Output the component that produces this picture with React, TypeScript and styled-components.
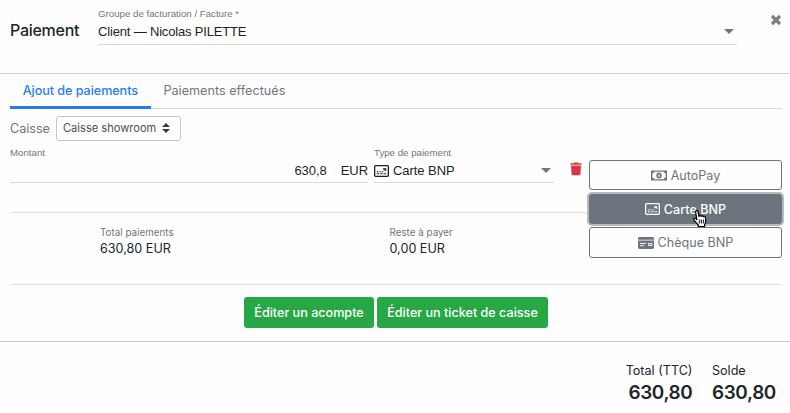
import React from 'react';
import styled, { createGlobalStyle, css } from 'styled-components';

const GlobalStyle = createGlobalStyle`
  * { box-sizing: border-box; }
  body {
    margin: 0;
    background: #fefefe;
    color: #212529;
    font-family: Inter, sans-serif;
    font-size: 12.6px;
    overflow: hidden;
  }
`;

const Dialog = styled.main`
  display: flex;
  flex-direction: column;
  width: 790px;
  height: 413px;
`;

const Header = styled.header`
  display: flex;
  height: 74px;
  padding-left: 10px;
  border-bottom: 1px solid #cfd0d2;
`;

const Title = styled.h1`
  width: 88px;
  margin: 20px 0 0;
  font-size: 16px;
  line-height: 20px;
  font-weight: 500;
  letter-spacing: -0.28px;
`;

const material = css`
  font-family: "Liberation Sans", Arial, sans-serif;
  color: #1f1f1f;
`;

const InvoiceField = styled.div`
  ${material}
  width: 639px;
  height: 45px;
  padding-top: 8px;
  border-bottom: 1px solid #dadada;
`;

const FieldLabel = styled.div`
  font-size: 9.7px;
  line-height: 12px;
  color: #757575;
  white-space: nowrap;
`;

const FieldValue = styled.div<{ $tight?: boolean }>`
  display: flex;
  align-items: center;
  height: 22px;
  font-size: 13px;
  letter-spacing: ${p => (p.$tight ? '-0.17px' : '-0.05px')};
  white-space: nowrap;
`;

const Caret = styled.i`
  margin: 0 3px 0 auto;
  border: 5px solid transparent;
  border-top-color: #757575;
  border-bottom: 0;
`;

const Close = styled.button`
  display: flex;
  width: 12px;
  height: 12px;
  margin: 14px 0 0 33px;
  padding: 0;
  border: 0;
  background: none;
  color: #7f7f7f;
`;

const Tabs = styled.nav`
  display: flex;
  height: 35px;
  margin: 0 8px 0 10px;
  border-bottom: 1px solid #d8dbde;
`;

const Tab = styled.a<{ $active?: boolean }>`
  height: 35px;
  padding: 7px 12.7px 0;
  line-height: 20px;
  white-space: nowrap;
  color: ${p => (p.$active ? '#277cf3' : '#6f777e')};
  font-weight: ${p => (p.$active ? 500 : 400)};
  letter-spacing: ${p => (p.$active ? '-0.05px' : '0.03px')};
  border-bottom: ${p => (p.$active ? '3px solid #277cf3' : '0')};
`;

const RegisterRow = styled.div`
  display: flex;
  align-items: center;
  height: 25px;
  margin: 7px 0 0 10px;
  color: #6c757d;
`;

const RegisterLabel = styled.span`
  width: 46px;
`;

const Select = styled.div`
  display: flex;
  align-items: center;
  justify-content: space-between;
  width: 125px;
  height: 25px;
  padding: 0 10px 1px 6px;
  border: 1px solid #c4c8d0;
  border-radius: 3px;
  color: #495057;
  font-size: 11.1px;
  white-space: nowrap;
`;

const Body = styled.section`
  display: grid;
  grid-template-columns: 579px 193px;
  height: 144px;
  margin: 0 8px 0 10px;
  border-bottom: 1px solid #dddfe1;
`;

const PaymentRow = styled.div`
  ${material}
  display: flex;
  height: 72px;
  padding-top: 6px;
  border-bottom: 1px solid #dddfe1;
`;

const PaymentField = styled.div<{ $width: number }>`
  width: ${p => p.$width}px;
  height: 36px;
  margin-right: 6px;
  border-bottom: 1px solid #dadada;
`;

const Amount = styled(FieldValue)`
  height: 23px;
  justify-content: flex-end;
  gap: 14px;
`;

const PaymentType = styled(FieldValue)`
  height: 23px;
  gap: 4px;
`;

const Trash = styled.button`
  display: flex;
  width: 12px;
  height: 14px;
  margin: 15px 0 0 10px;
  padding: 0;
  border: 0;
  background: none;
  color: #dc3545;
`;

const Totals = styled.div`
  display: flex;
  padding: 13px 0 0 90px;
`;

const Total = styled.div`
  flex: none;
  width: 289.5px;
  white-space: nowrap;
`;

const TotalLabel = styled.div`
  font-size: 9.75px;
  letter-spacing: 0.04px;
  line-height: 14px;
  color: #6c757d;
`;

const TotalValue = styled.div`
  font-size: 12.6px;
  line-height: 18px;
`;

const Methods = styled.div`
  display: flex;
  flex-direction: column;
  gap: 4px;
  padding-top: 19px;
`;

const Method = styled.button<{ $active?: boolean }>`
  display: flex;
  align-items: center;
  justify-content: center;
  gap: 4px;
  height: 30px;
  flex: none;
  padding: 0;
  border: 1px solid #6c757d;
  border-radius: 3px;
  font: ${p => (p.$active ? 500 : 400)} 12.6px Inter, sans-serif;
  background: ${p => (p.$active ? '#6c757d' : '#fefefe')};
  color: ${p => (p.$active ? '#fff' : '#6c757d')};
  box-shadow: ${p => (p.$active ? '0 0 0 2px #b5babe' : 'none')};
  position: relative;

  &:last-child {
    height: 31px;
    margin-top: -1px;
  }
`;

const Pointer = styled.svg`
  position: absolute;
  left: 102px;
  top: 14px;
`;

const Actions = styled.div`
  display: flex;
  justify-content: center;
  gap: 3px;
  height: 56px;
  padding: 12px 0 0 2px;
`;

const Action = styled.button<{ $width: number }>`
  width: ${p => p.$width}px;
  height: 31px;
  padding: 0;
  border: 0;
  border-radius: 3px;
  background: #28a745;
  color: #fff;
  font: 500 12.6px Inter, sans-serif;
  white-space: nowrap;
`;

const Footer = styled.footer`
  display: flex;
  justify-content: flex-end;
  gap: 19.5px;
  flex: 1;
  padding: 19px 14px 0 0;
  border-top: 1px solid #ccd1d6;
`;

const Sum = styled.div<{ $right?: boolean }>`
  text-align: ${p => (p.$right ? 'right' : 'left')};
  line-height: 20px;
  font-size: 12.6px;
`;

const SumValue = styled.div`
  font-size: 18.9px;
  font-weight: 600;
  letter-spacing: -0.35px;
  line-height: 24px;
`;

const CardIcon = () => (
  <svg width="15" height="12" viewBox="0 0 15 12" fill="none" stroke="currentColor">
    <rect x=".65" y=".65" width="13.7" height="10.7" rx="1" strokeWidth="1.3" />
    <path d="M2.8 6.7h1.6M5.400 6.7h1.4M7.800 6.7h1.4M2.8 8.8h2.4M6.200 8.8h2.4M9.600 8.8h2.6" strokeWidth="1.1" />
    <path d="M9 3.900h3.2M10.500 5h1.8" strokeWidth="1.5" />
  </svg>
);

const CashIcon = () => (
  <svg width="16" height="11" viewBox="0 0 16 11">
    <path fill="none" stroke="currentColor" strokeWidth="1.3" d="M.65 1.1h14.7v8.8H.65z" />
    <path fill="currentColor" d="M1 1h2.4A2.4 2.4 0 0 1 1 3.4zM15 1v2.4A2.4 2.4 0 0 1 12.6 1zM1 10V7.6A2.4 2.4 0 0 1 3.4 10zM15 10h-2.4A2.4 2.4 0 0 1 15 7.6z" />
    <ellipse cx="8" cy="5.5" rx="2.7" ry="3" fill="currentColor" />
    <path stroke="#fefefe" d="M8 4v3" />
  </svg>
);

const ChequeIcon = () => (
  <svg width="16" height="12" viewBox="0 0 16 12">
    <path fill="currentColor" d="M1 0h14l1 1v1.8H0V1zM0 3.5h16V11l-1 1H1l-1-1z" />
    <path stroke="#fefefe" d="M2 6.5h6M2 8.700h4M10.500 6.500H14v2h-3.500z" fill="none" strokeWidth=".9" />
  </svg>
);

export default function App() {
  return (
    <>
      <GlobalStyle />
      <Dialog>
        <Header>
          <Title>Paiement</Title>
          <InvoiceField>
            <FieldLabel>Groupe de facturation / Facture *</FieldLabel>
            <FieldValue $tight>Client — Nicolas PILETTE<Caret /></FieldValue>
          </InvoiceField>
          <Close aria-label="Fermer">
            <svg width="12" height="12" viewBox="0 0 12 12">
              <path d="M2 2l8 8M10 2l-8 8" stroke="currentColor" strokeWidth="3.3" />
            </svg>
          </Close>
        </Header>
        <Tabs>
          <Tab $active>Ajout de paiements</Tab>
          <Tab>Paiements effectués</Tab>
        </Tabs>
        <RegisterRow>
          <RegisterLabel>Caisse</RegisterLabel>
          <Select>
            Caisse showroom
            <svg width="8" height="10" viewBox="0 0 8 10" fill="#343a40">
              <path d="M4 0l4 4H0zM4 10l4-4H0z" />
            </svg>
          </Select>
        </RegisterRow>
        <Body>
          <div>
            <PaymentRow>
              <PaymentField $width={358}>
                <FieldLabel>Montant</FieldLabel>
                <Amount><span>630,8</span><span>EUR</span></Amount>
              </PaymentField>
              <PaymentField $width={180}>
                <FieldLabel>Type de paiement</FieldLabel>
                <PaymentType><CardIcon />Carte BNP<Caret /></PaymentType>
              </PaymentField>
              <Trash aria-label="Supprimer">
                <svg width="12" height="14" viewBox="0 0 12 14" fill="currentColor">
                  <path d="M.3 1.2h3.2L4 .4h4l.5.8h3.2v1.5H.3zM1 3.500h10l-.6 8.800q-.1.900-1 .900H2.600q-.9 0-1-.900z" />
                </svg>
              </Trash>
            </PaymentRow>
            <Totals>
              <Total>
                <TotalLabel>Total paiements</TotalLabel>
                <TotalValue>630,80 EUR</TotalValue>
              </Total>
              <Total>
                <TotalLabel>Reste à payer</TotalLabel>
                <TotalValue>0,00 EUR</TotalValue>
              </Total>
            </Totals>
          </div>
          <Methods>
            <Method><CashIcon />AutoPay</Method>
            <Method $active>
              <CardIcon />Carte BNP
              <Pointer width="17" height="19" viewBox="0 0 17 19">
                <path
                  d="M5 11L3.600 3.200Q3.500 1.500 4.700 1.400Q5.700 1.400 6 2.800L7 7.200Q8.500 6 9.200 7.300Q10.700 6.200 11.400 7.700Q13.200 7 13.500 9L13.700 12Q13.700 14 12.600 15.500V17.500H6.300V16L2 11.200Q1.200 9.500 2.500 9Q3.500 8.900 5 11z"
                  fill="#fff" stroke="#000" strokeWidth="1.2" />
                <path d="M7.300 10.500v4M9.300 10.500v4M11.300 10.500v4" stroke="#000" />
              </Pointer>
            </Method>
            <Method><ChequeIcon />Chèque BNP</Method>
          </Methods>
        </Body>
        <Actions>
          <Action $width={130}>Éditer un acompte</Action>
          <Action $width={171}>Éditer un ticket de caisse</Action>
        </Actions>
        <Footer>
          <Sum $right>Total (TTC)<SumValue>630,80</SumValue></Sum>
          <Sum>Solde<SumValue>630,80</SumValue></Sum>
        </Footer>
      </Dialog>
    </>
  );
}
